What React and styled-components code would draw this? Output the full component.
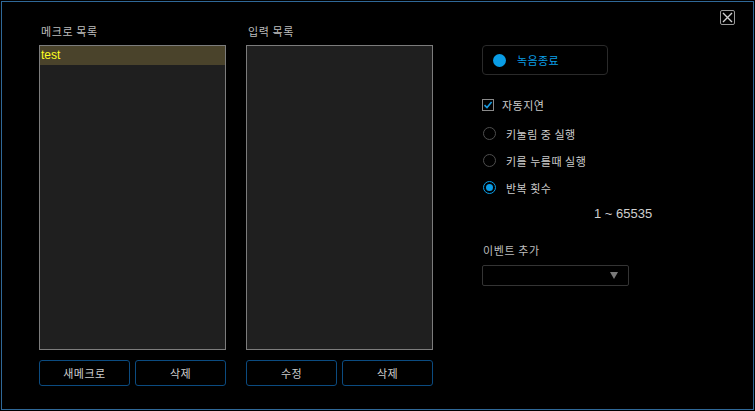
import React from 'react';
import styled, { createGlobalStyle } from 'styled-components';

const GlobalStyle = createGlobalStyle`
  html, body {
    margin: 0;
    padding: 0;
    background: #000;
  }
  body {
    font-family: "Noto Sans CJK KR", "Noto Sans", sans-serif;
    font-size: 11px;
    color: #c8c8c8;
  }
`;

const Frame = styled.div`
  position: relative;
  box-sizing: border-box;
  width: 753px;
  height: 409px;
  margin: 1px;
  border: 1px solid #2f6898;
  background: #000;
  display: flex;
  padding: 21px 0 0 37px;
`;

const ListColumn = styled.div`
  display: flex;
  flex-direction: column;
  width: 187px;
  margin-right: ${(p) => p.$gap || 0}px;
`;

const Label = styled.div`
  height: 22px;
  line-height: 16px;
  padding-left: 2px;
  color: #bdbdbd;
  letter-spacing: 0.6px;
`;

const ListBox = styled.div`
  box-sizing: border-box;
  height: 305px;
  border: 1px solid #7c7c7c;
  background: #1f1f1f;
`;

const ListItem = styled.div`
  height: 19px;
  line-height: 18px;
  padding-left: 1px;
  background: ${(p) => (p.$selected ? '#4a432b' : 'transparent')};
  color: ${(p) => (p.$selected ? '#ffff22' : '#d0d0d0')};
  font-family: "Liberation Sans", Arial, sans-serif;
  font-size: 12px;
`;

const ButtonRow = styled.div`
  display: flex;
  gap: 5px;
  margin-top: 10px;
`;

const Button = styled.button`
  box-sizing: border-box;
  width: 91px;
  height: 26px;
  border: 1px solid #0b4b80;
  border-radius: 3px;
  background: #000;
  color: #cfcfcf;
  font-family: inherit;
  font-size: 11px;
  letter-spacing: 0.5px;
  padding: 0;
`;

const Side = styled.div`
  display: flex;
  flex-direction: column;
  margin-left: 49px;
  padding-top: 22px;
`;

const RecordButton = styled.div`
  box-sizing: border-box;
  width: 126px;
  height: 30px;
  border: 1px solid #2a2a2a;
  border-radius: 4px;
  display: flex;
  align-items: center;
  padding-left: 10px;
  gap: 11px;
  color: #0b9ee6;
  letter-spacing: 0.4px;
`;

const Dot = styled.span`
  width: 13px;
  height: 13px;
  border-radius: 50%;
  background: #0a9de6;
`;

const OptionRow = styled.div`
  display: flex;
  align-items: center;
  height: 27px;
  margin-bottom: ${(p) => p.$after || 0}px;
  gap: ${(p) => p.$gap || 10}px;
  color: #cdcdcd;
  letter-spacing: 0.5px;
`;

const Options = styled.div`
  display: flex;
  flex-direction: column;
  margin-top: 16px;
`;

const CheckBox = styled.span`
  box-sizing: border-box;
  width: 12px;
  height: 12px;
  border: 1px solid #8a8a8a;
  display: flex;
  align-items: center;
  justify-content: center;
`;

const Radio = styled.span`
  box-sizing: border-box;
  width: 13px;
  height: 13px;
  border-radius: 50%;
  border: 1px solid ${(p) => (p.$checked ? '#0a9de6' : '#4e4e4e')};
  display: flex;
  align-items: center;
  justify-content: center;
  margin-left: 1px;
  &::after {
    content: '';
    display: ${(p) => (p.$checked ? 'block' : 'none')};
    width: 7px;
    height: 7px;
    border-radius: 50%;
    background: #0a9de6;
  }
`;

const Range = styled.div`
  margin-top: 5px;
  padding-left: 112px;
  font-family: "Liberation Sans", Arial, sans-serif;
  font-size: 13px;
  color: #cfcfcf;
`;

const EventLabel = styled.div`
  margin-top: 21px;
  padding-left: 1px;
  color: #bdbdbd;
  letter-spacing: 0.6px;
`;

const Select = styled.div`
  box-sizing: border-box;
  width: 147px;
  height: 21px;
  margin-top: 7px;
  border: 1px solid #343434;
  border-radius: 2px;
  display: flex;
  align-items: center;
  justify-content: flex-end;
  padding-right: 10px;
`;

const Arrow = styled.span`
  width: 0;
  height: 0;
  border-left: 4px solid transparent;
  border-right: 4px solid transparent;
  border-top: 7px solid #7a7a7a;
`;

const CloseButton = styled.div`
  position: absolute;
  top: 8px;
  right: 18px;
  box-sizing: border-box;
  width: 15px;
  height: 15px;
  border: 1px solid #9a9a9a;
  border-radius: 2px;
  display: flex;
  align-items: center;
  justify-content: center;
`;

export default function App() {
  return (
    <>
      <GlobalStyle />
      <Frame>
        <ListColumn $gap={20}>
          <Label>메크로 목록</Label>
          <ListBox>
            <ListItem $selected>test</ListItem>
          </ListBox>
          <ButtonRow>
            <Button>새메크로</Button>
            <Button>삭제</Button>
          </ButtonRow>
        </ListColumn>
        <ListColumn>
          <Label>입력 목록</Label>
          <ListBox />
          <ButtonRow>
            <Button>수정</Button>
            <Button>삭제</Button>
          </ButtonRow>
        </ListColumn>
        <Side>
          <RecordButton>
            <Dot />
            <span>녹음종료</span>
          </RecordButton>
          <Options>
            <OptionRow $gap={8} $after={2}>
              <CheckBox>
                <svg width="10" height="10" viewBox="0 0 10 10">
                  <path d="M1.5 5.2 L4 7.6 L8.6 2" fill="none" stroke="#1a9be0" strokeWidth="1.6" />
                </svg>
              </CheckBox>
              <span>자동지연</span>
            </OptionRow>
            <OptionRow>
              <Radio />
              <span>키눌림 중 실행</span>
            </OptionRow>
            <OptionRow>
              <Radio />
              <span>키를 누를때 실행</span>
            </OptionRow>
            <OptionRow>
              <Radio $checked />
              <span>반복 횟수</span>
            </OptionRow>
          </Options>
          <Range>1 ~ 65535</Range>
          <EventLabel>이벤트 추가</EventLabel>
          <Select>
            <Arrow />
          </Select>
        </Side>
        <CloseButton>
          <svg width="11" height="11" viewBox="0 0 11 11">
            <path d="M1 1 L10 10 M10 1 L1 10" stroke="#d0d0d0" strokeWidth="1.4" />
          </svg>
        </CloseButton>
      </Frame>
    </>
  );
}
